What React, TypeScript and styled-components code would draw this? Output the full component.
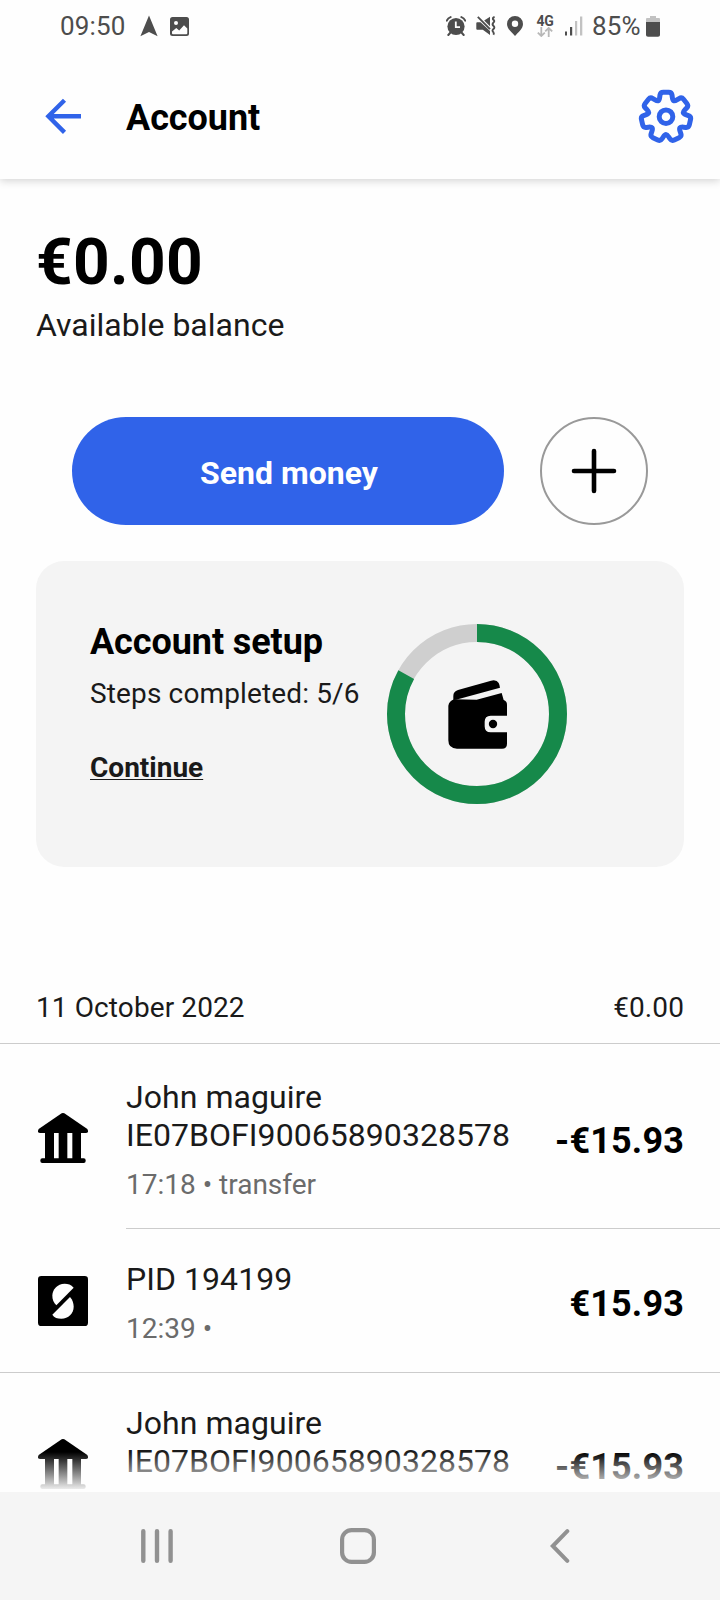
import React from "react";
import styled, { createGlobalStyle } from "styled-components";

const GlobalStyle = createGlobalStyle`
  * { box-sizing: border-box; }
  html, body { margin: 0; padding: 0; background: #fefefe; }
  body { font-family: Roboto, "Liberation Sans", sans-serif; color: #1a1a1a; }
`;

const Screen = styled.div`
  width: 720px;
  height: 1600px;
  display: flex;
  flex-direction: column;
  overflow: hidden;
  background: #fefefe;
`;

const StatusBar = styled.div`
  height: 52px;
  flex: none;
  display: flex;
  justify-content: space-between;
  padding: 11px 60px 0 60px;
  color: #4d4d4d;
  font-size: 26px;
  line-height: 30px;
`;

const StatusGroup = styled.div`
  display: flex;
  align-items: center;
  height: 30px;
`;

const Clock = styled.span`
  letter-spacing: 0.15px;
`;

const StatusIcon = styled.svg<{ $gap: number }>`
  display: block;
  flex: none;
  margin-left: ${(p) => p.$gap}px;
`;

const Battery = styled.span`
  margin-left: 9px;
  width: 50px;
  letter-spacing: 0.2px;
  white-space: nowrap;
`;

const NetworkBadge = styled.div`
  display: flex;
  flex-direction: column;
  align-items: center;
  width: 18px;
  margin-left: 13px;
  height: 23px;
  font-size: 14px;
  font-weight: 700;
  letter-spacing: -0.4px;
  line-height: 12px;
`;

const Header = styled.header`
  height: 127px;
  flex: none;
  display: flex;
  align-items: center;
  padding: 0 26px 0 44px;
  background: #fefefe;
  box-shadow: 0 2px 8px rgba(0, 0, 0, 0.17);
  clip-path: inset(0 0 -14px 0);
`;

const IconButton = styled.button`
  display: flex;
  padding: 0;
  border: 0;
  background: none;
`;

const HeaderTitle = styled.h1`
  flex: 1;
  margin: 4px 0 0 44px;
  font-size: 36px;
  line-height: 44px;
  font-weight: 700;
  letter-spacing: -0.05px;
  color: #000;
`;

const Content = styled.main`
  flex: 1;
  min-height: 0;
  overflow: hidden;
`;

const Balance = styled.section`
  padding: 46px 36px 0;
`;

const BalanceAmount = styled.div`
  font-size: 64px;
  line-height: 76px;
  font-weight: 700;
  letter-spacing: 0.3px;
  color: #000;
`;

const BalanceLabel = styled.div`
  margin-top: 5px;
  font-size: 32px;
  line-height: 38px;
`;

const Actions = styled.div`
  display: flex;
  gap: 36px;
  padding: 73px 72px 0;
`;

const PrimaryButton = styled.button`
  flex: 1;
  height: 108px;
  border: 0;
  border-radius: 54px;
  padding: 3px 0 0 2px;
  background: #3063e9;
  color: #fff;
  font: 700 32px/38px Roboto, sans-serif;
`;

const RoundButton = styled.button`
  width: 108px;
  height: 108px;
  padding: 0;
  border: 2px solid #999;
  border-radius: 50%;
  background: none;
  display: flex;
  align-items: center;
  justify-content: center;
`;

const SetupCard = styled.section`
  display: flex;
  margin: 36px 36px 0;
  height: 306px;
  padding: 59px 54px 0;
  border-radius: 28px;
  background: #f4f4f4;
`;

const SetupText = styled.div`
  width: 297px;
  flex: none;
`;

const SetupTitle = styled.h2`
  margin: 0;
  font-size: 36px;
  line-height: 44px;
  font-weight: 700;
  letter-spacing: -0.08px;
  color: #000;
`;

const SetupSteps = styled.div`
  margin-top: 13px;
  font-size: 28px;
  line-height: 34px;
  letter-spacing: 0.14px;
  white-space: nowrap;
`;

const ContinueLink = styled.a`
  display: inline-block;
  margin-top: 40px;
  font-size: 28px;
  line-height: 34px;
  font-weight: 700;
  text-decoration: underline;
  text-decoration-thickness: 1px;
  text-underline-offset: 2px;
  text-decoration-skip-ink: none;
`;

const ProgressRing = styled.svg`
  display: block;
  margin-top: 4px;
`;

const DayHeader = styled.div`
  display: flex;
  justify-content: space-between;
  margin-top: 124px;
  padding: 0 36px 18px;
  border-bottom: 1px solid #ccc;
  margin-bottom: 3px;
  font-size: 28px;
  line-height: 34px;
  letter-spacing: 0.1px;
`;

const Row = styled.div<{ $last?: boolean }>`
  display: flex;
  align-items: stretch;
  padding-left: 38px;
  border-bottom: ${(p) => (p.$last ? "1px solid #ccc" : "0")};
`;

const RowIcon = styled.div`
  width: 88px;
  flex: none;
  display: flex;
  align-items: center;
`;

const RowBody = styled.div<{ $divided?: boolean }>`
  flex: 1;
  display: flex;
  align-items: center;
  justify-content: space-between;
  padding: 31px 36px 26px 0;
  border-bottom: ${(p) => (p.$divided ? "1px solid #ccc" : "0")};
`;

const RowName = styled.div`
  font-size: 32px;
  line-height: 38px;
  letter-spacing: 0.05px;
`;

const RowMeta = styled.div`
  margin-top: 14px;
  font-size: 28px;
  line-height: 34px;
  color: #6b6b6b;
`;

const RowAmount = styled.div`
  font-size: 36px;
  line-height: 44px;
  font-weight: 700;
  letter-spacing: 0.15px;
  color: #000;
  padding-top: 2px;
`;

/* Sits over the last rows of the list, just above the navigation bar. */
const BottomFade = styled.div`
  position: relative;
  flex: none;
  height: 40px;
  margin-top: -40px;
  background: linear-gradient(rgba(254, 254, 254, 0), #fefefe);
`;

const NavBar = styled.nav`
  height: 108px;
  flex: none;
  display: flex;
  align-items: center;
  padding-left: 141px;
  background: #f5f5f5;
`;

const NavIcon = styled.svg<{ $gap?: number }>`
  display: block;
  margin-left: ${(p) => p.$gap ?? 0}px;
`;

/* Closed path through the points with each corner rounded off. */
function roundedPath(points: [number, number][], radius: number) {
  const n = points.length;
  const toward = (a: [number, number], b: [number, number]) => {
    const len = Math.hypot(b[0] - a[0], b[1] - a[1]);
    const t = Math.min(radius, len / 2) / len;
    return [a[0] + (b[0] - a[0]) * t, a[1] + (b[1] - a[1]) * t];
  };
  return (
    points
      .map((p, i) => {
        const from = toward(p, points[(i + n - 1) % n]);
        const to = toward(p, points[(i + 1) % n]);
        return `${i ? "L" : "M"}${from.join(" ")}Q${p.join(" ")} ${to.join(" ")}`;
      })
      .join("") + "Z"
  );
}

const gearPoints: [number, number][] = Array.from({ length: 7 }).flatMap((_, k) => {
  const mid = -90 + (k * 360) / 7;
  return [
    [17.8, -22],
    [25.2, -13],
    [25.2, 13],
    [17.8, 22],
  ].map(([r, a]): [number, number] => {
    const rad = ((mid + a) * Math.PI) / 180;
    return [r * Math.cos(rad), r * Math.sin(rad)];
  });
});

const GearIcon = () => (
  <svg width="56" height="56" viewBox="-28 -28.7 56 56" fill="none" stroke="#3063e9" strokeWidth="5" strokeLinejoin="round">
    <path d={roundedPath(gearPoints, 3)} />
    <circle r="6.8" />
  </svg>
);

const BackArrow = () => (
  <svg width="38" height="38" viewBox="0 0 38 38" fill="none" stroke="#3063e9" strokeWidth="4.4">
    <path d="M37 19.3H4.6M20.5 3.2L4.4 19.3L20.5 35.4" />
  </svg>
);

const BankIcon = () => (
  <svg width="50" height="50" viewBox="114 429 150 150">
    <path d="M185 430Q189 428 193 430L262 477Q268 489 257 489H121Q110 489 116 477Z" />
    <path d="M135 485H162V568H135ZM176 485H202V568H176ZM217 485H243V568H217Z" />
    <rect x="121" y="565" width="136" height="14" rx="6" />
  </svg>
);

const SIcon = () => (
  <svg width="50" height="50" viewBox="114 168 150 150">
    <rect x="114" y="168" width="150" height="150" rx="10" />
    <g fill="#fefefe">
      <path d="M221 203C213 193 204 191 194 191C172 191 157 208 157 227C157 239 161 248 169 256Z" />
      <path d="M157 284L210 231C218 240 221 250 221 260C221 280 205 296 184 296C172 296 163 293 157 284Z" />
    </g>
  </svg>
);

const SetupProgress = ({ value }: { value: number }) => (
  <ProgressRing width="180" height="180" viewBox="51 72 540 540">
    <g fill="none" strokeWidth="54" transform="rotate(-90 321 342)">
      <circle cx="321" cy="342" r="243" stroke="#cfcfcf" />
      <circle cx="321" cy="342" r="243" stroke="#16894a" pathLength="100" strokeDasharray={`${value} 100`} />
    </g>
    <g transform="translate(0 1)">
      <path d="M250 299V286Q250 274 264 269L363 241Q380 237 386 248Q389 254 390 262L258 298Z" />
      <path d="M320 298L395 278L401 299Q411 303 411 313V346H362Q344 346 344 364V378Q344 396 362 396H411V430Q411 445 396 445H261Q235 445 235 420V316Q237 302 253 297Z" />
      <circle cx="369" cy="371" r="12.5" />
    </g>
  </ProgressRing>
);

type Transaction = { icon: React.ReactNode; name: string[]; meta: string; amount: string };

const transactions: Transaction[] = [
  { icon: <BankIcon />, name: ["John maguire", "IE07BOFI90065890328578"], meta: "17:18 • transfer", amount: "-€15.93" },
  { icon: <SIcon />, name: ["PID 194199"], meta: "12:39 •", amount: "€15.93" },
  { icon: <BankIcon />, name: ["John maguire", "IE07BOFI90065890328578"], meta: "", amount: "-€15.93" },
];

export default function App() {
  return (
    <Screen>
      <GlobalStyle />
      <StatusBar>
        <StatusGroup>
          <Clock>09:50</Clock>
          <StatusIcon $gap={14} width="18" height="22" viewBox="0 0 18 22" fill="#4d4d4d">
            <path d="M9 0.5L17.6 21.2L9 17L0.4 21.2Z" />
          </StatusIcon>
          <StatusIcon $gap={12} width="19" height="19" viewBox="0 0 19 19">
            <rect width="19" height="19" rx="2.5" fill="#4d4d4d" />
            <path d="M2 14.5L6.3 11L9.2 13.5L14 8.2L17.3 11.5V16.2Q17.3 17.2 16.2 17.2H3Q2 17.2 2 16.2Z" fill="#fefefe" />
            <circle cx="6" cy="6" r="2" fill="#fefefe" />
          </StatusIcon>
        </StatusGroup>
        <StatusGroup>
          <StatusIcon $gap={0} width="20" height="20" viewBox="0 0 20 20" fill="none" stroke="#4d4d4d">
            <circle cx="10" cy="10.5" r="8.6" fill="#4d4d4d" stroke="none" />
            <path d="M0.8 4.6Q2 2 4.6 1.1M15.4 1.1Q18 2 19.2 4.6M4.5 16.5L2.3 19M15.5 16.5L17.7 19" strokeWidth="2" strokeLinecap="round" />
            <path d="M9.8 5.5V11.2H14" stroke="#fefefe" strokeWidth="1.8" />
          </StatusIcon>
          <StatusIcon $gap={10} width="20" height="20" viewBox="0 0 20 20" fill="#4d4d4d">
            <path d="M0.3 7.2Q0.3 6.3 1.2 6.3H4.5L14 15V19L6.8 13.8H1.2Q0.3 13.8 0.3 12.8ZM8.2 4.6L14 0.8V10.2Z" />
            <path d="M1.8 0.9L14 13.2" stroke="#4d4d4d" strokeWidth="1.9" />
            <path d="M18.6 1Q16.4 1.6 17 3.4Q19.5 5 17.2 6.8Q15.8 8.4 17.6 10Q19.3 11.6 17.2 13.2Q15.8 14.8 17.4 16.2Q18.3 17.5 17.4 18.8" fill="none" stroke="#4d4d4d" strokeWidth="1.9" />
          </StatusIcon>
          <StatusIcon $gap={11} width="16" height="20" viewBox="0 0 16 20" fill="#4d4d4d">
            <path fillRule="evenodd" d="M8 0A8 8 0 0 1 16 8C16 13 11 16.5 8 20C5 16.5 0 13 0 8A8 8 0 0 1 8 0ZM8 4.6A3.2 3.2 0 1 0 8 11A3.2 3.2 0 1 0 8 4.6Z" />
          </StatusIcon>
          <NetworkBadge>
            4G
            <svg width="16" height="10" viewBox="0 0 16 10" fill="none" stroke="#b8b8b8" strokeWidth="1.8">
              <path d="M4.3 0V9M0.8 5.6L4.3 9L7.8 5.6M11.7 10V1M8.2 4.4L11.7 1L15.2 4.4" />
            </svg>
          </NetworkBadge>
          <StatusIcon $gap={11} width="18" height="20" viewBox="0 0 18 20">
            <path d="M0 15.5H2V19.5H0ZM5 11H7.2V19.5H5Z" fill="#4d4d4d" />
            <path d="M10 5H12.2V19.5H10ZM15 0.5H17.3V19.5H15Z" fill="#c2c2c2" />
          </StatusIcon>
          <Battery>85%</Battery>
          <StatusIcon $gap={4} width="14" height="21" viewBox="0 0 14 21">
            <path d="M4 0H10V2H13Q14 2 14 3V8H0V3Q0 2 1 2H4Z" fill="#c2c2c2" />
            <path d="M0 6H14V19Q14 20.8 12 20.8H2Q0 20.8 0 19Z" fill="#4d4d4d" />
          </StatusIcon>
        </StatusGroup>
      </StatusBar>

      <Header>
        <IconButton aria-label="Back"><BackArrow /></IconButton>
        <HeaderTitle>Account</HeaderTitle>
        <IconButton aria-label="Settings"><GearIcon /></IconButton>
      </Header>

      <Content>
        <Balance>
          <BalanceAmount>€0.00</BalanceAmount>
          <BalanceLabel>Available balance</BalanceLabel>
        </Balance>

        <Actions>
          <PrimaryButton>Send money</PrimaryButton>
          <RoundButton aria-label="Add money">
            <svg width="46" height="46" viewBox="0 0 46 46" stroke="#000" strokeWidth="4.6" strokeLinecap="round">
              <path d="M23 3V43M3 23H43" />
            </svg>
          </RoundButton>
        </Actions>

        <SetupCard>
          <SetupText>
            <SetupTitle>Account setup</SetupTitle>
            <SetupSteps>Steps completed: 5/6</SetupSteps>
            <ContinueLink>Continue</ContinueLink>
          </SetupText>
          <SetupProgress value={83} />
        </SetupCard>

        <DayHeader>
          <span>11 October 2022</span>
          <span>€0.00</span>
        </DayHeader>

        {transactions.map((t, i) => (
          <Row key={i} $last={i === 1}>
            <RowIcon>{t.icon}</RowIcon>
            <RowBody $divided={i === 0}>
              <div>
                {t.name.map((line) => (
                  <RowName key={line}>{line}</RowName>
                ))}
                <RowMeta>{t.meta || "\u00a0"}</RowMeta>
              </div>
              <RowAmount>{t.amount}</RowAmount>
            </RowBody>
          </Row>
        ))}
      </Content>
      <BottomFade />

      <NavBar>
        <NavIcon width="32" height="34" viewBox="0 0 32 34" stroke="#919191" strokeWidth="4.4" strokeLinecap="round">
          <path d="M2.3 2.3V31.7M16 2.3V31.7M29.6 2.3V31.7" />
        </NavIcon>
        <NavIcon $gap={167} width="36" height="36" viewBox="0 0 36 36" fill="none" stroke="#919191" strokeWidth="4.2">
          <rect x="2.1" y="2.1" width="31.8" height="31.8" rx="9.5" />
        </NavIcon>
        <NavIcon $gap={174} width="20" height="34" viewBox="0 0 20 34" fill="none" stroke="#919191" strokeWidth="4" strokeLinecap="round">
          <path d="M17.3 2.2L2.8 17L17.3 31.8" />
        </NavIcon>
      </NavBar>
    </Screen>
  );
}
